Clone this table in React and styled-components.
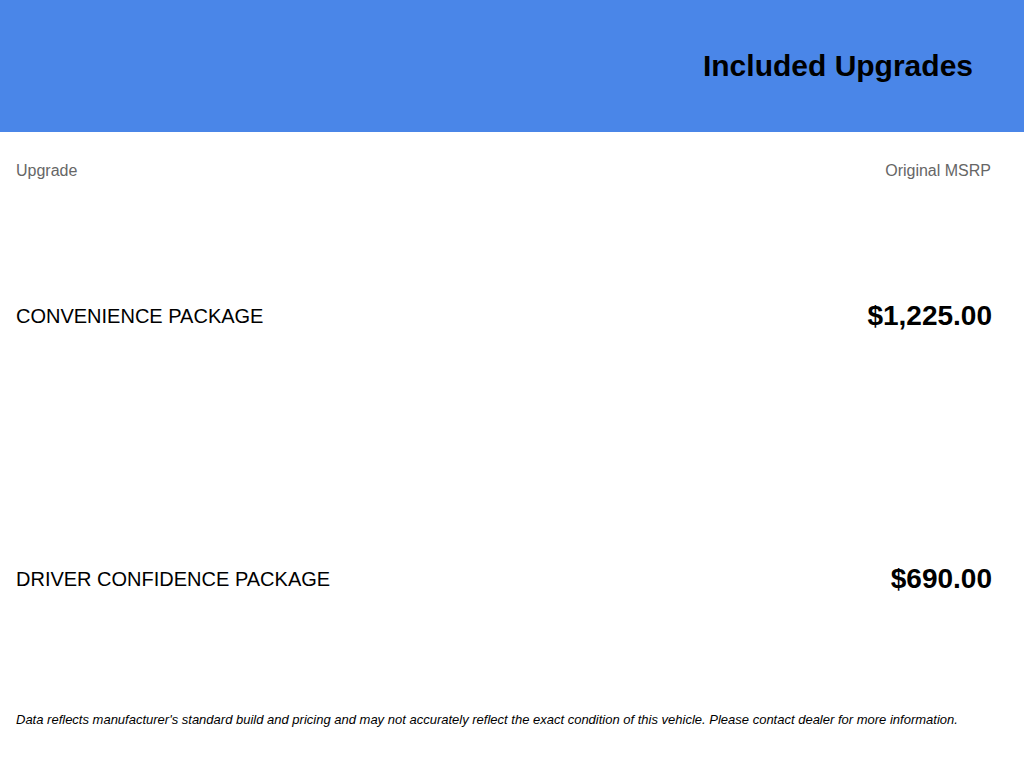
import styled, { createGlobalStyle } from 'styled-components'

const GlobalStyle = createGlobalStyle`
   body {
      margin: 0;
      background: #ffffff;
      font-family: "Liberation Sans", Arial, sans-serif;
   }
`

const Header = styled.header`
   background-color: #4a86e8;
   height: 132px;
   display: flex;
   align-items: center;
   justify-content: flex-end;
   padding-right: 51px;
   box-sizing: border-box;
`

const Title = styled.h1`
   margin: 0;
   font-size: 30px;
   font-weight: 700;
   color: #000000;
`

const Content = styled.main`
   padding: 0 32px 0 16px;
`

const Labels = styled.div`
   display: flex;
   justify-content: space-between;
   padding-top: 29px;
   margin-bottom: 3px;
   line-height: 20px;
   font-size: 16px;
   color: #666666;
`

const LabelRight = styled.span`
   margin-right: 1px;
`

const Row = styled.div`
   display: flex;
   align-items: center;
   justify-content: space-between;
   height: 263px;
`

const Name = styled.span`
   font-size: 20px;
   line-height: 24px;
   color: #000000;
`

const Price = styled.span`
   font-size: 28px;
   font-weight: 700;
   color: #000000;
`

const Note = styled.p`
   margin: 1px 0 0;
   font-size: 13px;
   line-height: 18px;
   font-style: italic;
   color: #000000;
`

const upgrades = [
   { name: 'CONVENIENCE PACKAGE', price: '$1,225.00' },
   { name: 'DRIVER CONFIDENCE PACKAGE', price: '$690.00' },
]

export default function App() {
   return (
      <>
         <GlobalStyle />
         <Header>
            <Title>Included Upgrades</Title>
         </Header>
         <Content>
            <Labels>
               <span>Upgrade</span>
               <LabelRight>Original MSRP</LabelRight>
            </Labels>
            {upgrades.map((u) => (
               <Row key={u.name}>
                  <Name>{u.name}</Name>
                  <Price>{u.price}</Price>
               </Row>
            ))}
            <Note>
               Data reflects manufacturer's standard build and pricing and may not accurately reflect the exact condition of this vehicle. Please contact dealer for more information.
            </Note>
         </Content>
      </>
   )
}
